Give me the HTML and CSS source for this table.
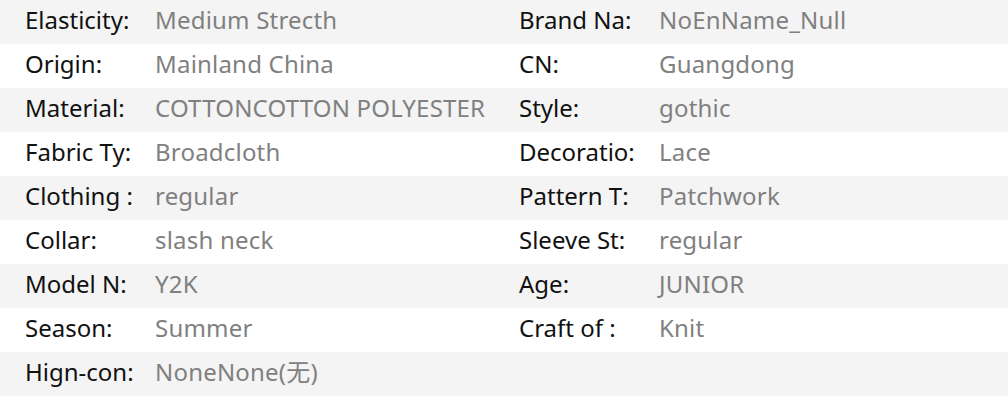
FILE: index.html
```html
<!DOCTYPE html>
<html lang="en">
<head>
    <meta charset="UTF-8">
    <title>Item Specifics</title>
    <link rel="stylesheet" href="styles.css">
</head>
<body>
    <!-- item specifics, two pairs per row -->
    <div class="specs">
        <div class="spec-row">
            <span class="spec-label">Elasticity:</span><span class="spec-value">Medium Strecth</span>
            <span class="spec-label">Brand Na:</span><span class="spec-value">NoEnName_Null</span>
        </div>
        <div class="spec-row">
            <span class="spec-label">Origin:</span><span class="spec-value">Mainland China</span>
            <span class="spec-label">CN:</span><span class="spec-value">Guangdong</span>
        </div>
        <div class="spec-row">
            <span class="spec-label">Material:</span><span class="spec-value">COTTONCOTTON POLYESTER</span>
            <span class="spec-label">Style:</span><span class="spec-value">gothic</span>
        </div>
        <div class="spec-row">
            <span class="spec-label">Fabric Ty:</span><span class="spec-value">Broadcloth</span>
            <span class="spec-label">Decoratio:</span><span class="spec-value">Lace</span>
        </div>
        <div class="spec-row">
            <span class="spec-label">Clothing :</span><span class="spec-value">regular</span>
            <span class="spec-label">Pattern T:</span><span class="spec-value">Patchwork</span>
        </div>
        <div class="spec-row">
            <span class="spec-label">Collar:</span><span class="spec-value">slash neck</span>
            <span class="spec-label">Sleeve St:</span><span class="spec-value">regular</span>
        </div>
        <div class="spec-row">
            <span class="spec-label">Model N:</span><span class="spec-value">Y2K</span>
            <span class="spec-label">Age:</span><span class="spec-value">JUNIOR</span>
        </div>
        <div class="spec-row">
            <span class="spec-label">Season:</span><span class="spec-value">Summer</span>
            <span class="spec-label">Craft of :</span><span class="spec-value">Knit</span>
        </div>
        <div class="spec-row">
            <span class="spec-label">Hign-con:</span><span class="spec-value">NoneNone(无)</span>
        </div>
    </div>
</body>
</html>
```

FILE: styles.css
```css
body {
    margin: 0;
    background-color: #ffffff;
    font-family: "Noto Sans", "Noto Sans CJK SC", sans-serif;
    font-size: 24px;
}

.specs {
    width: 1008px;
}

.spec-row {
    display: grid;
    grid-template-columns: 130px 364px 140px 1fr;
    align-items: center;
    box-sizing: border-box;
    height: 44px;
    padding: 0 0 4px 25px;
    white-space: nowrap;
    line-height: 40px;
}

.spec-row:nth-child(odd) {
    background-color: #f4f4f4;
}

.spec-label {
    color: #111111;
}

.spec-value {
    color: #808080;
    letter-spacing: 0.2px;
}
```
